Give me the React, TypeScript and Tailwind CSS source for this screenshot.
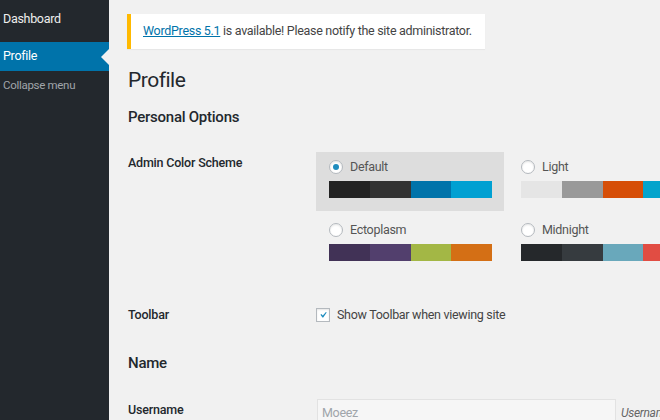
import React from "react";

const schemes = [
  { name: "Default", colors: ["#222222", "#333333", "#0073aa", "#00a0d2"], selected: true },
  { name: "Light", colors: ["#e5e5e5", "#999999", "#d64e07", "#04a4cc"], selected: false },
  { name: "Ectoplasm", colors: ["#413256", "#523f6d", "#a3b745", "#d46f15"], selected: false },
  { name: "Midnight", colors: ["#25282b", "#363b3f", "#69a8bb", "#e14d43"], selected: false },
];

function Radio({ checked }: { checked: boolean }) {
  return (
    <span className="relative flex h-[14px] w-[14px] shrink-0 items-center justify-center rounded-full border border-[#b4b9be] bg-white shadow-[inset_0_1px_2px_rgba(0,0,0,0.1)]">
      {checked && <span className="h-[6px] w-[6px] rounded-full bg-[#1e8cbe]" />}
    </span>
  );
}

function Scheme({ s }: { s: (typeof schemes)[number] }) {
  return (
    <div
      className={`flex h-[59px] w-[188px] shrink-0 flex-col pl-[13px] pr-[12px] pt-[7px] ${
        s.selected ? "bg-[#dddddd]" : ""
      }`}
    >
      <div className="flex h-[16px] items-center gap-[7px]">
        <Radio checked={s.selected} />
        <span className="text-[12.5px] leading-[16px] tracking-[-0.3px] text-[#555]">{s.name}</span>
      </div>
      <div className="mt-[6px] flex h-[17px] w-[163px]">
        {s.colors.map((c, i) => (
          <div key={i} className="h-full flex-1" style={{ backgroundColor: c }} />
        ))}
      </div>
    </div>
  );
}

export default function App() {
  return (
    <div
      className="flex h-[420px] w-[660px] overflow-hidden bg-[#f1f1f1] tracking-[-0.3px]"
      style={{ fontFamily: 'Roboto, "Noto Sans", sans-serif' }}
    >
      {/* Sidebar */}
      <div className="flex w-[109px] shrink-0 flex-col bg-[#23282d] pt-[4px]">
        <div className="flex h-[30px] shrink-0 items-center pl-[3px] text-[12.5px] text-[#eeeeee]">Dashboard</div>
        <div className="relative mt-[8px] flex h-[29px] shrink-0 items-center bg-[#0073aa] pl-[3px] text-[12.5px] text-white">
          Profile
          <span className="absolute right-0 top-1/2 h-0 w-0 -translate-y-1/2 border-y-[8px] border-r-[8px] border-y-transparent border-r-[#f1f1f1]" />
        </div>
        <div className="flex h-[29px] shrink-0 items-center pl-[3px] text-[11.5px] text-[#a0a5aa]">Collapse menu</div>
      </div>

      {/* Main */}
      <div className="flex min-w-0 flex-1 flex-col pl-[19px] pt-[14px]">
        <div className="-ml-px flex h-[35px] w-[358px] shrink-0 items-center whitespace-nowrap border-l-4 border-[#ffb900] bg-white pl-[12px] text-[12.5px] text-[#444] shadow-[0_1px_1px_rgba(0,0,0,0.04)]">
          <span className="text-[#0073aa] underline">WordPress 5.1</span>
          <span>&nbsp;is available! Please notify the site administrator.</span>
        </div>

        <h1 className="mt-[17px] shrink-0 text-[21px] font-normal leading-[29px] tracking-[-0.5px] text-[#23282d]">
          Profile
        </h1>

        <h2 className="mt-[11px] shrink-0 text-[15px] font-medium leading-[22px] tracking-[-0.25px] text-[#23282d]">
          Personal Options
        </h2>

        {/* Admin color scheme */}
        <div className="mt-[24px] flex shrink-0">
          <div className="w-[188px] shrink-0 pt-[1px] text-[12.5px] font-medium leading-[20px] tracking-[-0.2px] text-[#23282d]">
            Admin Color Scheme
          </div>
          <div className="grid grid-cols-[188px_188px] gap-x-[4px] gap-y-[4px]">
            {schemes.map((s) => (
              <Scheme key={s.name} s={s} />
            ))}
          </div>
        </div>

        {/* Toolbar */}
        <div className="mt-[32px] flex h-[18px] shrink-0 items-center">
          <div className="w-[188px] shrink-0 text-[12.5px] font-medium leading-[18px] tracking-[-0.2px] text-[#23282d]">
            Toolbar
          </div>
          <div className="flex items-center gap-[7px]">
            <span className="flex h-[14px] w-[14px] items-center justify-center border border-[#b4b9be] bg-white shadow-[inset_0_1px_2px_rgba(0,0,0,0.1)]">
              <svg viewBox="0 0 20 20" className="h-[14px] w-[14px]">
                <path d="M14.83 4.89l1.34.94-5.81 8.38H9.02L5.78 9.67l1.34-1.25 2.57 2.4z" fill="#1e8cbe" />
              </svg>
            </span>
            <span className="text-[12.5px] leading-[18px] text-[#444]">Show Toolbar when viewing site</span>
          </div>
        </div>

        <h2 className="mt-[28px] shrink-0 text-[15px] font-medium leading-[22px] tracking-[-0.25px] text-[#23282d]">
          Name
        </h2>

        {/* Username */}
        <div className="mt-[25px] flex shrink-0 items-start">
          <div className="mt-[1px] w-[189px] shrink-0 text-[12.5px] font-medium leading-[20px] tracking-[-0.2px] text-[#23282d]">
            Username
          </div>
          <div className="flex h-[28px] w-[299px] shrink-0 items-center border border-[#e2e2e2] bg-[#f6f6f6] pl-[4px] text-[12.5px] text-[#a0a5aa]">
            Moeez
          </div>
          <span className="ml-[5px] mt-[4px] whitespace-nowrap text-[12px] italic leading-[20px] text-[#666]">
            Usernames cannot be changed.
          </span>
        </div>
      </div>
    </div>
  );
}
